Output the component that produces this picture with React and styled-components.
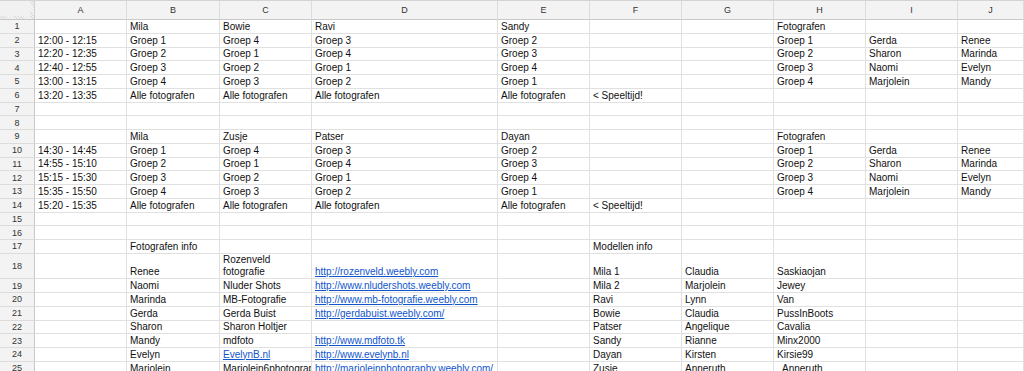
import React from 'react';
import styled, { createGlobalStyle } from 'styled-components';

const columns = ['A', 'B', 'C', 'D', 'E', 'F', 'G', 'H', 'I', 'J'];

const link = (t) => ({ t, link: true });

// Rijen van het rooster, kolom A t/m J
const rows = [
  ['', 'Mila', 'Bowie', 'Ravi', 'Sandy', '', '', 'Fotografen'],
  ['12:00 - 12:15', 'Groep 1', 'Groep 4', 'Groep 3', 'Groep 2', '', '', 'Groep 1', 'Gerda', 'Renee'],
  ['12:20 - 12:35', 'Groep 2', 'Groep 1', 'Groep 4', 'Groep 3', '', '', 'Groep 2', 'Sharon', 'Marinda'],
  ['12:40 - 12:55', 'Groep 3', 'Groep 2', 'Groep 1', 'Groep 4', '', '', 'Groep 3', 'Naomi', 'Evelyn'],
  ['13:00 - 13:15', 'Groep 4', 'Groep 3', 'Groep 2', 'Groep 1', '', '', 'Groep 4', 'Marjolein', 'Mandy'],
  ['13:20 - 13:35', 'Alle fotografen', 'Alle fotografen', 'Alle fotografen', 'Alle fotografen', '< Speeltijd!'],
  [],
  [],
  ['', 'Mila', 'Zusje', 'Patser', 'Dayan', '', '', 'Fotografen'],
  ['14:30 - 14:45', 'Groep 1', 'Groep 4', 'Groep 3', 'Groep 2', '', '', 'Groep 1', 'Gerda', 'Renee'],
  ['14:55 - 15:10', 'Groep 2', 'Groep 1', 'Groep 4', 'Groep 3', '', '', 'Groep 2', 'Sharon', 'Marinda'],
  ['15:15 - 15:30', 'Groep 3', 'Groep 2', 'Groep 1', 'Groep 4', '', '', 'Groep 3', 'Naomi', 'Evelyn'],
  ['15:35 - 15:50', 'Groep 4', 'Groep 3', 'Groep 2', 'Groep 1', '', '', 'Groep 4', 'Marjolein', 'Mandy'],
  ['15:20 - 15:35', 'Alle fotografen', 'Alle fotografen', 'Alle fotografen', 'Alle fotografen', '< Speeltijd!'],
  [],
  [],
  ['', 'Fotografen info', '', '', '', 'Modellen info'],
  ['', 'Renee', { t: 'Rozenveld fotografie', wrap: true }, link('http://rozenveld.weebly.com'), '', 'Mila 1', 'Claudia', 'Saskiaojan'],
  ['', 'Naomi', 'Nluder Shots', link('http://www.nludershots.weebly.com'), '', 'Mila 2', 'Marjolein', 'Jewey'],
  ['', 'Marinda', 'MB-Fotografie', link('http://www.mb-fotografie.weebly.com'), '', 'Ravi', 'Lynn', 'Van'],
  ['', 'Gerda', 'Gerda Buist', link('http://gerdabuist.weebly.com/'), '', 'Bowie', 'Claudia', 'PussInBoots'],
  ['', 'Sharon', 'Sharon Holtjer', '', '', 'Patser', 'Angelique', 'Cavalia'],
  ['', 'Mandy', 'mdfoto', link('http://www.mdfoto.tk'), '', 'Sandy', 'Rianne', 'Minx2000'],
  ['', 'Evelyn', link('EvelynB.nl'), link('http://www.evelynb.nl'), '', 'Dayan', 'Kirsten', 'Kirsie99'],
  ['', 'Marjolein', 'Marjolein6photography', link('http://marjoleinphotography.weebly.com/'), '', 'Zusje', 'Anneruth', '  Anneruth'],
];

const tallRows = { 18: true };

const App = () => (
  <>
    <GlobalStyle />
    <Sheet>
      <Corner />
      {columns.map((c) => (
        <ColHeader key={c}>{c}</ColHeader>
      ))}
      {rows.map((row, r) => {
        const n = r + 1;
        return (
          <React.Fragment key={n}>
            <RowHeader $tall={tallRows[n]}>{n}</RowHeader>
            {columns.map((c, i) => {
              const v = row[i] ?? '';
              const cell = typeof v === 'string' ? { t: v } : v;
              return (
                <Cell key={c} $tall={tallRows[n]} $wrap={cell.wrap}>
                  {cell.link ? <Link>{cell.t}</Link> : cell.t}
                </Cell>
              );
            })}
          </React.Fragment>
        );
      })}
    </Sheet>
  </>
);

const GlobalStyle = createGlobalStyle`
  html, body {
    margin: 0;
    padding: 0;
    background: #fff;
    overflow: hidden;
  }
  body {
    font-family: "Liberation Sans", Arial, sans-serif;
  }
`;

const Sheet = styled.div`
  display: grid;
  grid-template-columns: 35px 92px 93px 92px 186px 92px 92px 92px 92px 92px 1fr;
  grid-auto-rows: auto;
  width: 1024px;
  border-top: 1px solid #d4d4d4;
`;

const Corner = styled.div`
  position: relative;
  height: 18px;
  background: #f1f1f1;
  border-right: 1px solid #cfcfcf;
  border-bottom: 1px solid #c8c8c8;

  &::after {
    content: '';
    position: absolute;
    right: 0;
    top: 0;
    width: 4px;
    height: 100%;
    background: repeating-linear-gradient(45deg, #e0e0e0 0 1px, #f7f7f7 1px 2px);
  }

  &::before {
    content: '';
    position: absolute;
    left: 0;
    bottom: 0;
    width: 100%;
    height: 3px;
    background: repeating-linear-gradient(45deg, #e0e0e0 0 1px, #f7f7f7 1px 2px);
  }
`;

const ColHeader = styled.div`
  height: 18px;
  background: #f3f3f3;
  border-right: 1px solid #dcdcdc;
  border-bottom: 1px solid #c8c8c8;
  display: flex;
  align-items: center;
  justify-content: center;
  font-size: 9px;
  color: #333;
`;

const RowHeader = styled.div`
  box-sizing: border-box;
  height: ${({ $tall }) => ($tall ? '25.5px' : '13.75px')};
  background: #f3f3f3;
  border-right: 1px solid #c8c8c8;
  border-bottom: 1px solid #dcdcdc;
  display: flex;
  align-items: center;
  justify-content: center;
  font-size: 9px;
  color: #333;
`;

const Cell = styled.div`
  box-sizing: border-box;
  height: ${({ $tall }) => ($tall ? '25.5px' : '13.75px')};
  border-right: 1px solid #e0e0e0;
  border-bottom: 1px solid #e0e0e0;
  padding: 0 2px 0 3px;
  display: flex;
  align-items: flex-end;
  overflow: hidden;
  white-space: ${({ $wrap }) => ($wrap ? 'normal' : 'pre')};
  font-size: 10px;
  line-height: ${({ $wrap }) => ($wrap ? '12px' : '12px')};
  color: #111;
`;

const Link = styled.span`
  color: #1155cc;
  text-decoration: underline;
`;

export default App;
